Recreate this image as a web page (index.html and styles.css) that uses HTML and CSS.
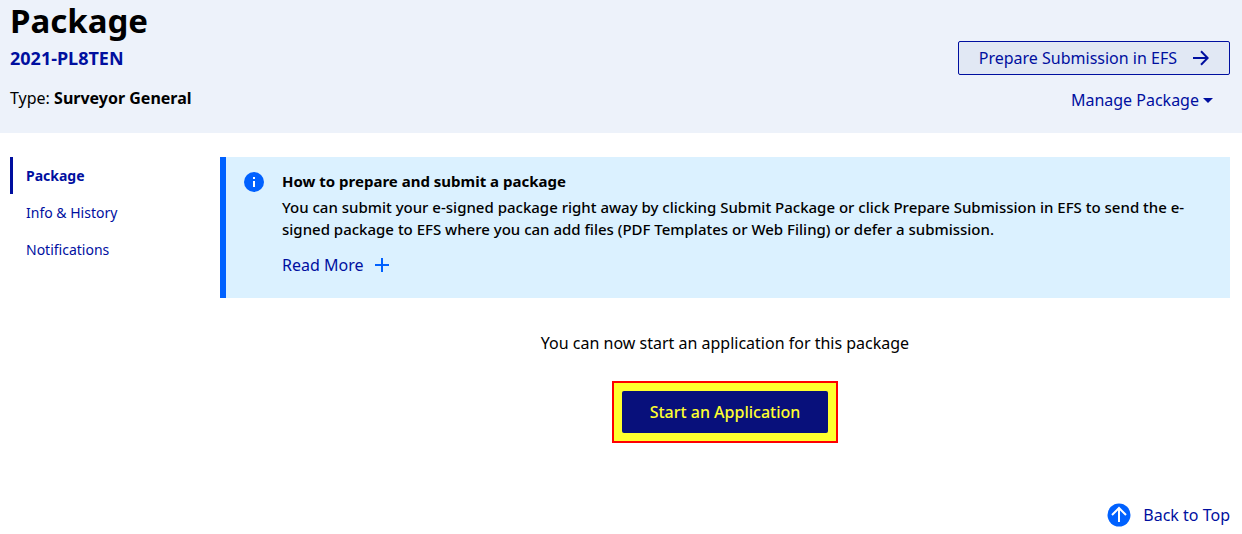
FILE: index.html
```html
<!DOCTYPE html>
<html lang="en">
<head>
    <meta charset="UTF-8">
    <meta name="viewport" content="width=device-width, initial-scale=1.0">
    <title>Package 2021-PL8TEN</title>
    <link rel="stylesheet" href="styles.css">
</head>
<body>
    <header class="pageHeader">
        <div class="packageInfo">
            <h1>Package</h1>
            <p class="packageNumber">2021-PL8TEN</p>
            <p class="packageType">Type: <strong>Surveyor General</strong></p>
        </div>
        <div class="headerActions">
            <button type="button" class="prepareBtn">
                Prepare Submission in EFS
                <svg width="16" height="16" viewBox="0 0 16 16" fill="none" stroke="currentColor" stroke-width="2">
                    <path d="M0 8h14.500M8 1.300L14.700 8L8 14.700"/>
                </svg>
            </button>
            <button type="button" class="manageBtn">
                Manage Package
                <svg width="10" height="5" viewBox="0 0 10 5" fill="currentColor">
                    <path d="M0 0h10L5 5z"/>
                </svg>
            </button>
        </div>
    </header>

    <div class="content">
        <nav class="sideNav">
            <a href="#package" class="active">Package</a>
            <a href="#history">Info &amp; History</a>
            <a href="#notifications">Notifications</a>
        </nav>

        <main>
            <section class="infoBox">
                <svg class="infoIcon" width="20" height="20" viewBox="0 0 20 20">
                    <circle cx="10" cy="10" r="10" fill="#0061ff"/>
                    <path d="M9 5h2v2H9zM9 9h2v6H9z" fill="#fff"/>
                </svg>
                <div class="infoText">
                    <h2>How to prepare and submit a package</h2>
                    <p>You can submit your e-signed package right away by clicking Submit Package or click Prepare Submission in EFS to send the e-signed package to EFS where you can add files (PDF Templates or Web Filing) or defer a submission.</p>
                    <button type="button" class="readMoreBtn">
                        Read More
                        <svg width="14" height="14" viewBox="0 0 14 14" stroke="#0061ff" stroke-width="2">
                            <path d="M0 7h14M7 0v14"/>
                        </svg>
                    </button>
                </div>
            </section>

            <section class="startSection">
                <p>You can now start an application for this package</p>
                <div class="highlight">
                    <button type="button" class="startBtn">Start an Application</button>
                </div>
            </section>
        </main>
    </div>

    <footer>
        <a href="#" class="backToTop">
            <svg width="24" height="24" viewBox="0 0 24 24">
                <circle cx="12" cy="12" r="11.500" fill="#0061ff"/>
                <path d="M12 19V5M5 12l7-7l7 7" fill="none" stroke="#fff" stroke-width="2"/>
            </svg>
            Back to Top
        </a>
    </footer>
</body>
</html>
```

FILE: styles.css
```css
* {
    box-sizing: border-box;
}

body {
    margin: 0;
    font-family: "Noto Sans", sans-serif;
    font-size: 16px;
    line-height: 24px;
    color: #000;
    background: #fff;
}

h1, h2, p {
    margin: 0;
}

a {
    color: #000f9f;
    text-decoration: none;
}

button {
    display: flex;
    align-items: center;
    gap: 8px;
    padding: 0;
    border: none;
    background: none;
    color: #000f9f;
    font: inherit;
    cursor: pointer;
}

.pageHeader {
    display: flex;
    justify-content: space-between;
    align-items: flex-end;
    padding: 0 12px 21px 10px;
    background: #edf2fa;
}

h1 {
    font-size: 33px;
    line-height: 42px;
}

.packageNumber {
    margin-top: 4px;
    font-size: 18px;
    font-weight: bold;
    color: #000f9f;
}

.packageType {
    margin-top: 14px;
    line-height: 28px;
}

.headerActions {
    display: flex;
    flex-direction: column;
    align-items: flex-end;
    gap: 13px;
}

.prepareBtn {
    height: 34px;
    padding: 0 20px;
    gap: 16px;
    border: 1px solid #000f9f;
    border-radius: 2px;
    background: #e1e8f4;
}

.manageBtn {
    gap: 4px;
    margin-right: 17px;
}

.content {
    display: flex;
    padding: 24px 12px 0 10px;
}

.sideNav {
    flex: 0 0 210px;
}

.sideNav a {
    display: block;
    padding: 0 13px;
    border-left: 3px solid transparent;
    font-size: 14px;
    line-height: 37px;
}

.sideNav .active {
    border-color: #000f9f;
    font-weight: bold;
}

main {
    flex: 1;
}

.infoBox {
    display: flex;
    gap: 18px;
    padding: 14px 24px 21px 18px;
    border-left: 6px solid #0061ff;
    background: #dbf1ff;
}

.infoIcon {
    flex: none;
    margin-top: 1px;
}

.infoText h2 {
    font-size: 15px;
    line-height: 20px;
}

.infoText p {
    margin-top: 5px;
    font-size: 15px;
    font-weight: 500;
    line-height: 22px;
}

.readMoreBtn {
    gap: 12px;
    margin-top: 13px;
}

.startSection {
    display: flex;
    flex-direction: column;
    align-items: center;
    gap: 26px;
    padding-top: 33px;
}

.highlight {
    padding: 8px;
    border: 2px solid #f00;
    background: #ffff2e;
}

.startBtn {
    padding: 9px 28px;
    border-radius: 2px;
    background: #08107b;
    color: #ffff2e;
    font-weight: 500;
}

footer {
    display: flex;
    justify-content: flex-end;
    padding: 60px 12px 7px;
}

.backToTop {
    display: flex;
    align-items: center;
    gap: 12px;
}
```
